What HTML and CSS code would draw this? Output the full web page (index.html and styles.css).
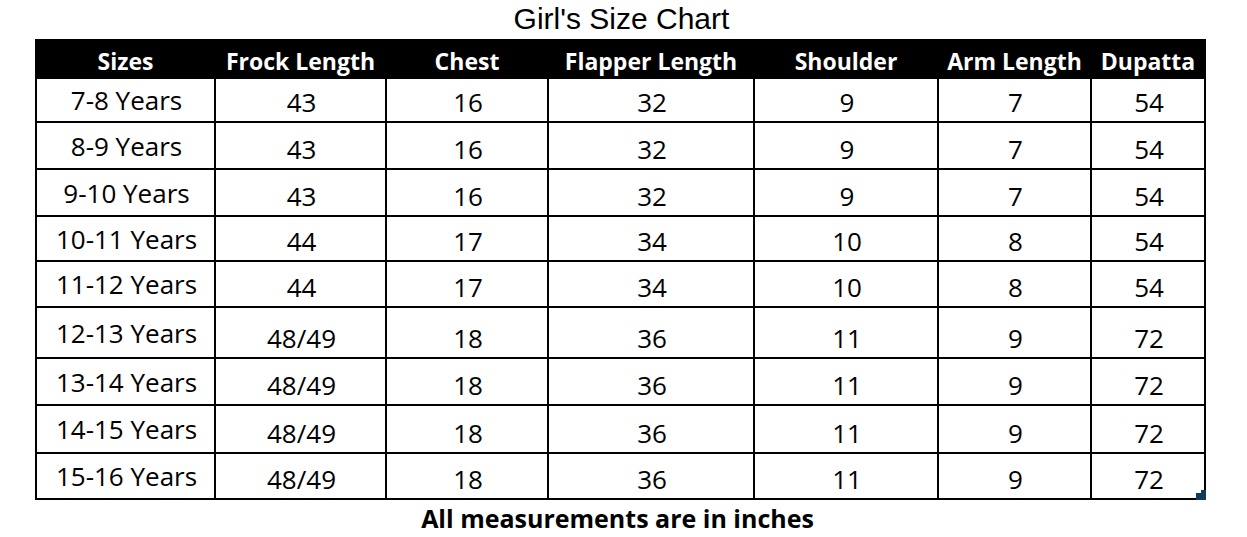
FILE: index.html
```html
<!DOCTYPE html>
<html lang="en">
<head>
<meta charset="utf-8">
<title>Girl's Size Chart</title>
<link rel="stylesheet" href="styles.css">
</head>
<body>
<div class="page">
  <div class="title">Girl's Size Chart</div>
  <div class="chart">
    <div class="hd">Sizes</div><div class="hd">Frock Length</div><div class="hd">Chest</div><div class="hd">Flapper Length</div><div class="hd">Shoulder</div><div class="hd">Arm Length</div><div class="hd">Dupatta</div>

    <div class="sz">7-8 Years</div><div class="num">43</div><div class="num">16</div><div class="num">32</div><div class="num">9</div><div class="num">7</div><div class="num">54</div>
    <div class="sz">8-9 Years</div><div class="num">43</div><div class="num">16</div><div class="num">32</div><div class="num">9</div><div class="num">7</div><div class="num">54</div>
    <div class="sz">9-10 Years</div><div class="num">43</div><div class="num">16</div><div class="num">32</div><div class="num">9</div><div class="num">7</div><div class="num">54</div>
    <div class="sz">10-11 Years</div><div class="num">44</div><div class="num">17</div><div class="num">34</div><div class="num">10</div><div class="num">8</div><div class="num">54</div>
    <div class="sz">11-12 Years</div><div class="num">44</div><div class="num">17</div><div class="num">34</div><div class="num">10</div><div class="num">8</div><div class="num">54</div>
    <div class="sz">12-13 Years</div><div class="num">48/49</div><div class="num">18</div><div class="num">36</div><div class="num">11</div><div class="num">9</div><div class="num">72</div>
    <div class="sz">13-14 Years</div><div class="num">48/49</div><div class="num">18</div><div class="num">36</div><div class="num">11</div><div class="num">9</div><div class="num">72</div>
    <div class="sz">14-15 Years</div><div class="num">48/49</div><div class="num">18</div><div class="num">36</div><div class="num">11</div><div class="num">9</div><div class="num">72</div>
    <div class="sz">15-16 Years</div><div class="num">48/49</div><div class="num">18</div><div class="num">36</div><div class="num">11</div><div class="num">9</div><div class="num last">72<span class="handle"></span></div>
  </div>
  <div class="note">All measurements are in inches</div>
</div>
</body>
</html>
```

FILE: styles.css
```css
html, body {
  margin: 0;
  padding: 0;
  background: #ffffff;
}

.page {
  width: 1171px;
  margin-left: 35px;
  color: #000000;
}

.title {
  box-sizing: border-box;
  height: 39px;
  padding-top: 1px;
  padding-left: 2px;
  font-family: "Liberation Sans", Arial, sans-serif;
  font-size: 30px;
  line-height: 36px;
  text-align: center;
}

.chart {
  display: grid;
  grid-template-columns: 177px 169px 160px 204px 182px 151px 112px;
  grid-template-rows: 36px 42px 45px 45px 43px 44px 49px 45px 46px 44px;
  gap: 2px;
  padding: 2px;
  background: #000000;
}

.hd {
  background: #000000;
  color: #ffffff;
  font-family: "Open Sans", "Noto Sans", sans-serif;
  font-weight: 700;
  font-size: 23px;
  line-height: 30px;
  display: flex;
  align-items: center;
  justify-content: center;
  padding-top: 3px;
  white-space: nowrap;
}

.sz,
.num {
  background: #ffffff;
  font-family: "Open Sans", "Noto Sans", sans-serif;
  font-size: 26px;
  line-height: 30px;
  display: flex;
  justify-content: center;
  white-space: nowrap;
  padding-left: 2px;
}

.sz {
  align-items: center;
}

.num {
  box-sizing: border-box;
  align-items: flex-end;
  padding-bottom: 4px;
}

.last {
  position: relative;
}

.handle {
  position: absolute;
  right: -2px;
  bottom: -2px;
  width: 10px;
  height: 7px;
  background: #0f3b5c;
}

.handle::before {
  content: "";
  position: absolute;
  right: 0;
  top: -3px;
  width: 5px;
  height: 3px;
  background: #0f3b5c;
}

.note {
  margin-top: 3px;
  padding-right: 6px;
  font-family: "Open Sans", "Noto Sans", sans-serif;
  font-weight: 700;
  font-size: 25px;
  line-height: 30px;
  text-align: center;
}
```
